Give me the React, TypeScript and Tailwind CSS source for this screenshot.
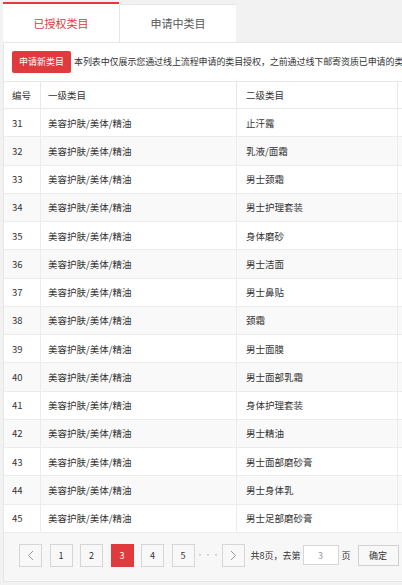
import React from "react";

const font = { fontFamily: '"Noto Sans CJK SC", "Noto Sans", sans-serif' };

const rows = [
  { id: 31, sub: "止汗露" },
  { id: 32, sub: "乳液/面霜" },
  { id: 33, sub: "男士颈霜" },
  { id: 34, sub: "男士护理套装" },
  { id: 35, sub: "身体磨砂" },
  { id: 36, sub: "男士洁面" },
  { id: 37, sub: "男士鼻贴" },
  { id: 38, sub: "颈霜" },
  { id: 39, sub: "男士面膜" },
  { id: 40, sub: "男士面部乳霜" },
  { id: 41, sub: "身体护理套装" },
  { id: 42, sub: "男士精油" },
  { id: 43, sub: "男士面部磨砂膏" },
  { id: 44, sub: "男士身体乳" },
  { id: 45, sub: "男士足部磨砂膏" },
];

function PageBtn({ children, active }: { children: React.ReactNode; active?: boolean }) {
  return (
    <div
      className={`w-[23px] h-[23px] flex items-center justify-center text-[9px] border ${
        active ? "bg-[#e0393e] border-[#e0393e] text-white" : "bg-[#f8f8f8] border-[#d6d6d6] text-[#333]"
      }`}
    >
      {children}
    </div>
  );
}

export default function App() {
  return (
    <div className="w-[402px] h-[585px] overflow-hidden bg-[#f2f2f2] pl-[3px]" style={font}>
      {/* Tabs */}
      <div className="flex items-end h-[42px]">
        <div className="w-[116px] h-[40px] bg-white border-t-2 border-[#e0393e] flex items-center justify-center text-[11px] text-[#e0393e]">
          已授权类目
        </div>
        <div className="w-[117px] h-[38px] bg-white border-l border-t border-[#e6e6e6] flex items-center justify-center text-[11px] text-[#555]">
          申请中类目
        </div>
      </div>

      {/* Panel */}
      <div className="w-[440px] h-[540px] bg-white border border-[#e6e6e6] flex flex-col">
        <div className="flex items-center pt-[8px] pl-[8px] gap-[3px]">
          <div className="w-[59px] h-[22px] bg-[#e0393e] rounded-[2px] text-white text-[9px] flex items-center justify-center shrink-0">
            申请新类目
          </div>
          <div className="text-[9px] text-[#333] whitespace-nowrap tracking-[-0.1px]">
            本列表中仅展示您通过线上流程申请的类目授权，之前通过线下邮寄资质已申请的类目授权请联系客服查询
          </div>
        </div>

        {/* Table */}
        <div className="mt-[8px] border-t border-[#e8e8e8] text-[9.5px] text-[#333]">
          <div className="flex h-[27px] border-b border-[#e8e8e8] items-center">
            <div className="w-[37px] h-full flex items-center pl-[8px] border-r border-[#e8e8e8]">编号</div>
            <div className="w-[196px] h-full flex items-center pl-[7px] border-r border-[#e8e8e8]">一级类目</div>
            <div className="w-[161px] h-full flex items-center pl-[9px] border-r border-[#e8e8e8]">二级类目</div>
            <div className="flex-1 h-full" />
          </div>
          {rows.map((r, i) => (
            <div
              key={r.id}
              className={`flex h-[28.27px] border-b border-[#ececec] items-center ${
                i % 2 === 1 ? "bg-[#f9f9f9]" : "bg-white"
              }`}
            >
              <div className="w-[37px] h-full flex items-center pl-[8px] border-r border-[#ececec]">{r.id}</div>
              <div className="w-[196px] h-full flex items-center pl-[7px] border-r border-[#ececec]">
                美容护肤/美体/精油
              </div>
              <div className="w-[161px] h-full flex items-center pl-[9px] border-r border-[#ececec]">{r.sub}</div>
              <div className="flex-1 h-full" />
            </div>
          ))}
        </div>

        {/* Pagination */}
        <div className="flex-1 bg-[#f7f7f7] pl-[15px] pt-[11px]">
          <div className="flex items-center">
            <div className="flex items-center gap-[7.5px]">
              <PageBtn>
                <svg width="7" height="11" viewBox="0 0 7 11" fill="none">
                  <path d="M6 1L1.5 5.5L6 10" stroke="#999" strokeWidth="1" />
                </svg>
              </PageBtn>
              <PageBtn>1</PageBtn>
              <PageBtn>2</PageBtn>
              <PageBtn active>3</PageBtn>
              <PageBtn>4</PageBtn>
              <PageBtn>5</PageBtn>
            </div>
            <div className="w-[27px] text-center text-[8px] text-[#bbb]">···</div>
            <PageBtn>
              <svg width="7" height="11" viewBox="0 0 7 11" fill="none">
                <path d="M1 1L5.5 5.5L1 10" stroke="#999" strokeWidth="1" />
              </svg>
            </PageBtn>
            <div className="ml-[6px] text-[9px] text-[#333] whitespace-nowrap">共8页，去第</div>
            <div className="ml-[2px] w-[36px] h-[20px] bg-white border border-[#d6d6d6] flex items-center justify-center text-[9px] text-[#999]">
              3
            </div>
            <div className="ml-[3px] text-[9px] text-[#333]">页</div>
            <div className="ml-[7px] w-[41px] h-[21px] bg-[#f8f8f8] border border-[#d0d0d0] flex items-center justify-center text-[9px] text-[#333]">
              确定
            </div>
          </div>
        </div>
      </div>
    </div>
  );
}
